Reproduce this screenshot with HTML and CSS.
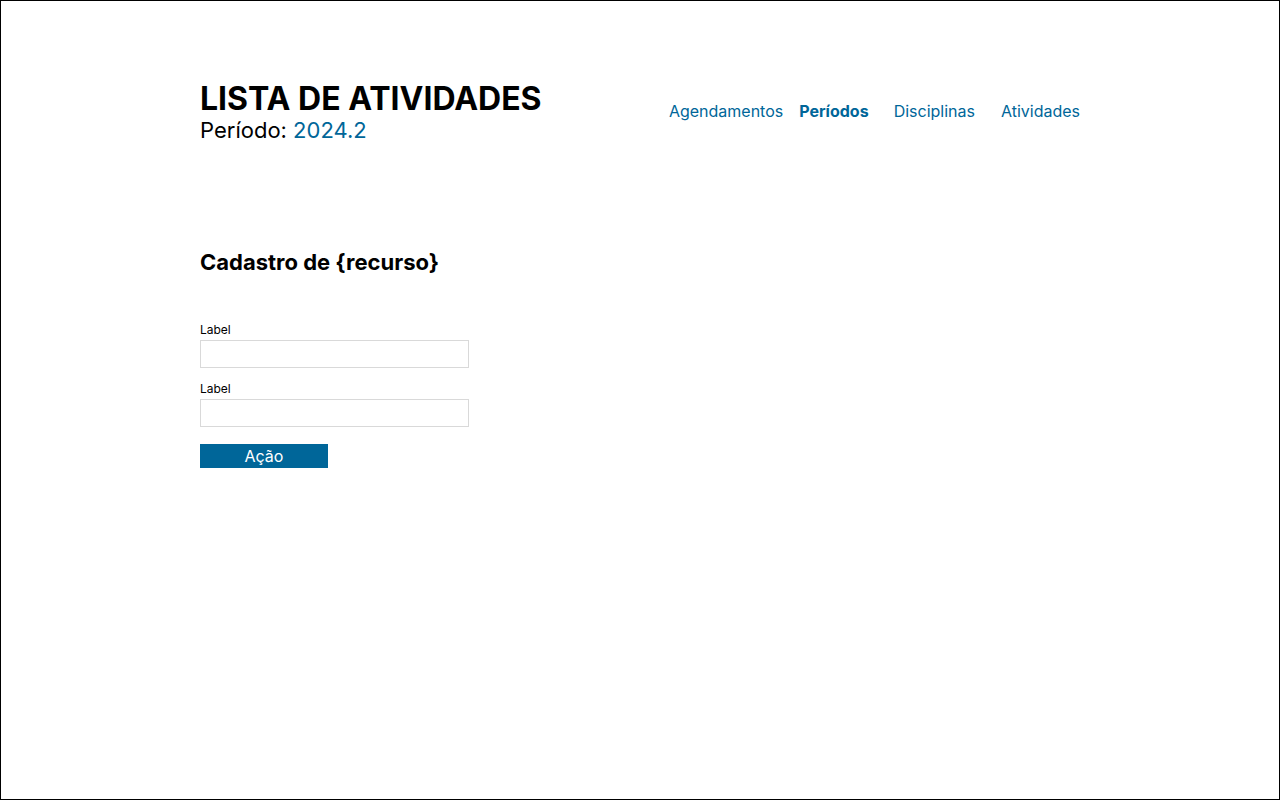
FILE: index.html
```html
<!DOCTYPE html>
<html lang="pt-BR">
<head>
<meta charset="utf-8">
<title>Lista de Atividades</title>
<link rel="stylesheet" href="styles.css">
</head>
<body>
<div class="page">
  <header class="header">
    <div class="brand">
      <h1 class="brand-title">LISTA DE ATIVIDADES</h1>
      <p class="brand-period">Período: <span class="period-value">2024.2</span></p>
    </div>
    <nav class="nav">
      <a class="nav-link nav-agendamentos" href="#">Agendamentos</a>
      <a class="nav-link nav-periodos active" href="#">Períodos</a>
      <a class="nav-link nav-disciplinas" href="#">Disciplinas</a>
      <a class="nav-link nav-atividades" href="#">Atividades</a>
    </nav>
  </header>
  <main class="content">
    <h2 class="section-title">Cadastro de {recurso}</h2>
    <form class="form">
      <div class="field">
        <label class="field-label">Label</label>
        <input class="field-input" type="text">
      </div>
      <div class="field">
        <label class="field-label">Label</label>
        <input class="field-input" type="text">
      </div>
      <button class="btn" type="button">Ação</button>
    </form>
  </main>
</div>
</body>
</html>
```

FILE: styles.css
```css
* { box-sizing: border-box; }
html, body { margin: 0; padding: 0; }
body {
  font-family: Inter, "Noto Sans", sans-serif;
  color: #000;
  background: #fff;
}
.page {
  width: 1280px;
  height: 800px;
  border: 1px solid #000;
  padding-top: 82px;
}
.header {
  width: 880px;
  margin: 0 auto;
  display: flex;
  justify-content: space-between;
  align-items: flex-start;
}
.brand-title {
  margin: 0;
  font-size: 32px;
  line-height: 32px;
  font-weight: 700;
}
.brand-period {
  margin: 2px 0 0;
  font-size: 22px;
  line-height: 26px;
}
.period-value { color: #006699; }
.nav {
  display: flex;
  align-items: center;
  margin-top: 18px;
}
.nav-link {
  font-size: 16px;
  line-height: 20px;
  color: #006699;
  text-decoration: none;
}
.nav-link.active { font-weight: 700; }
.nav-periodos { margin-left: 16px; }
.nav-disciplinas { margin-left: 25px; }
.nav-atividades { margin-left: 26px; }
.content {
  width: 880px;
  margin: 0 auto;
  padding-top: 106px;
}
.section-title {
  margin: 0;
  font-size: 22px;
  line-height: 26px;
  font-weight: 700;
}
.form {
  margin-top: 47px;
  display: flex;
  flex-direction: column;
  align-items: flex-start;
}
.field { margin-bottom: 13px; }
.field-label {
  display: block;
  font-size: 12px;
  line-height: 15px;
  margin-bottom: 3px;
}
.field-input {
  display: block;
  width: 269px;
  height: 28px;
  border: 1px solid #d9d9d9;
  border-radius: 0;
  padding: 0 6px;
  margin: 0;
  font-family: inherit;
}
.btn {
  margin-top: 4px;
  width: 128px;
  height: 24px;
  border: none;
  border-radius: 0;
  background: #006699;
  color: #fff;
  font-family: inherit;
  font-size: 16px;
  padding: 0;
}
```
